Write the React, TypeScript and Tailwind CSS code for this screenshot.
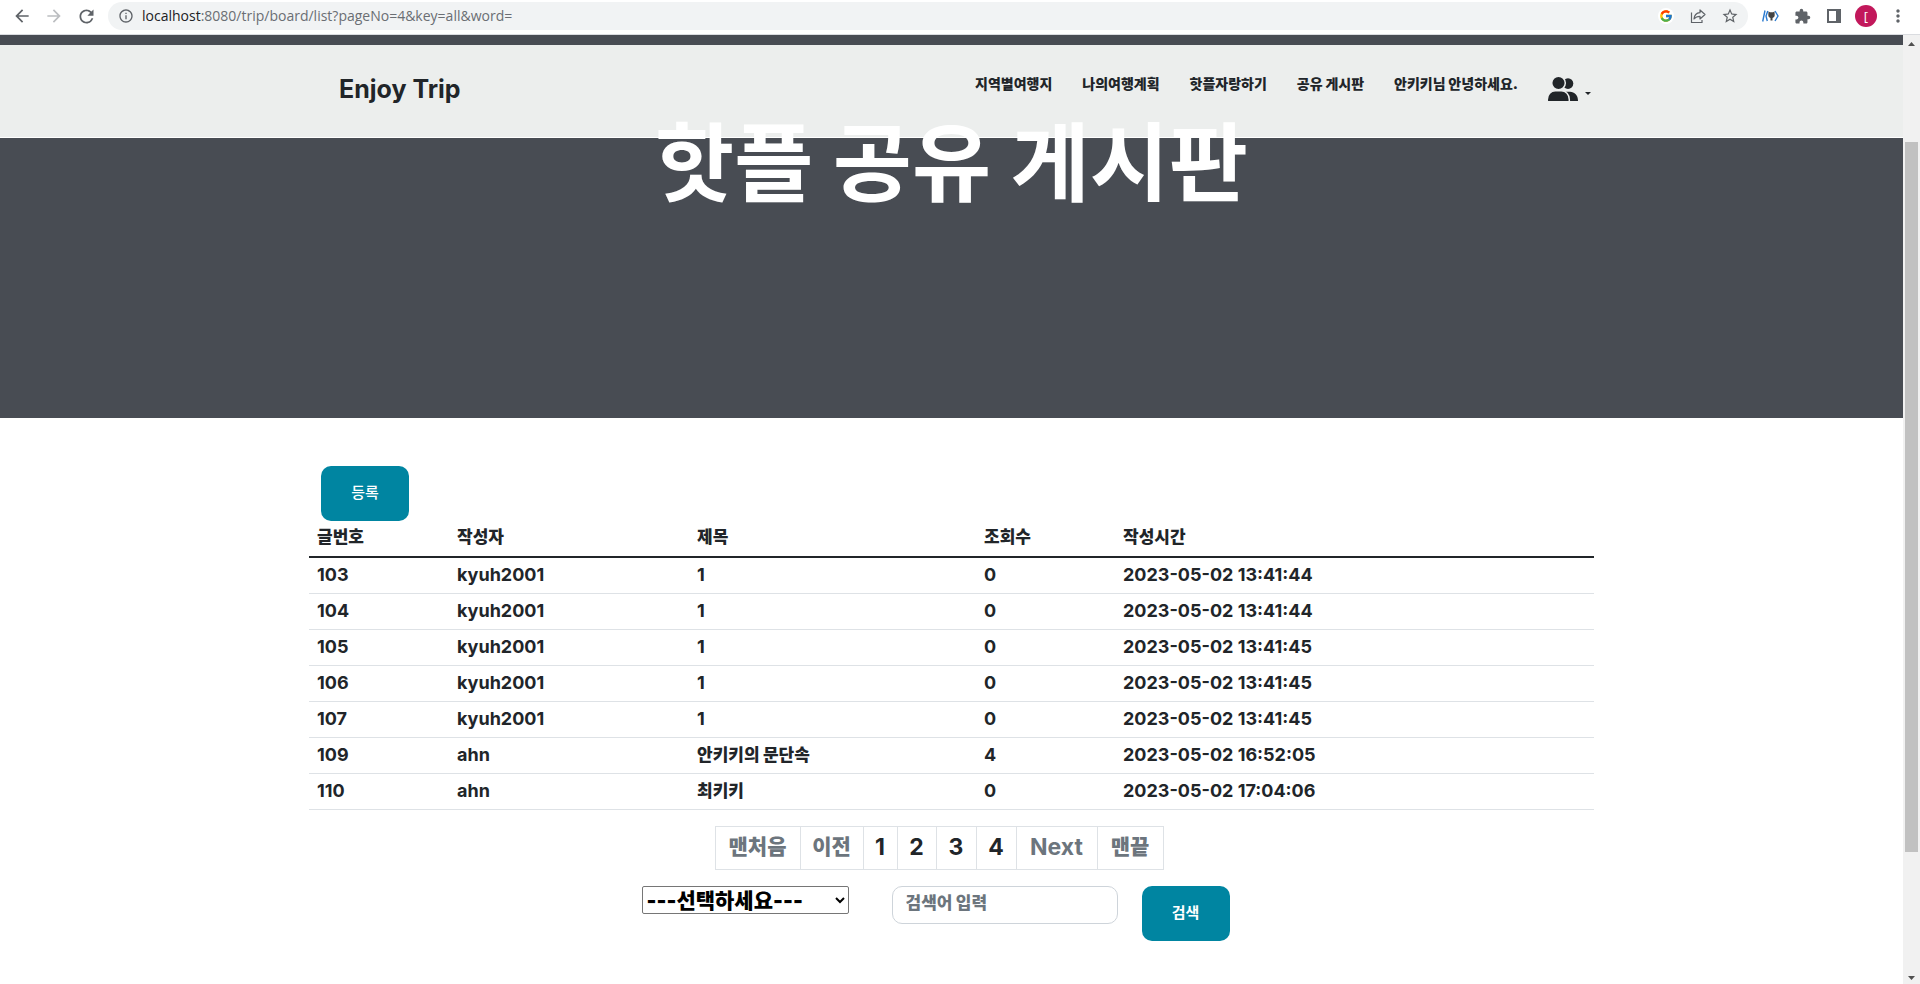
import { ReactNode } from "react";
import { FcGoogle } from "react-icons/fc";
import {
  MdArrowBack,
  MdArrowForward,
  MdExtension,
  MdInfoOutline,
  MdMoreVert,
  MdRefresh,
  MdStarBorder,
} from "react-icons/md";

const menu = ["지역별여행지", "나의여행계획", "핫플자랑하기", "공유 게시판", "안키키님 안녕하세요."];

const posts = [
  { no: 103, writer: "kyuh2001", title: "1", hits: 0, time: "2023-05-02 13:41:44" },
  { no: 104, writer: "kyuh2001", title: "1", hits: 0, time: "2023-05-02 13:41:44" },
  { no: 105, writer: "kyuh2001", title: "1", hits: 0, time: "2023-05-02 13:41:45" },
  { no: 106, writer: "kyuh2001", title: "1", hits: 0, time: "2023-05-02 13:41:45" },
  { no: 107, writer: "kyuh2001", title: "1", hits: 0, time: "2023-05-02 13:41:45" },
  { no: 109, writer: "ahn", title: "안키키의 문단속", hits: 4, time: "2023-05-02 16:52:05" },
  { no: 110, writer: "ahn", title: "최키키", hits: 0, time: "2023-05-02 17:04:06" },
];

const pages = [
  { label: "맨처음", style: "w-[86px] text-[21px] font-black text-[#6c757d]" },
  { label: "이전", style: "w-16 text-[21px] font-black text-[#6c757d]" },
  { label: "1", style: "w-[35px] text-[23px] font-bold text-[#212529]" },
  { label: "2", style: "w-10 text-[23px] font-bold text-[#212529]" },
  { label: "3", style: "w-[41px] text-[23px] font-bold text-[#212529]" },
  { label: "4", style: "w-[41px] text-[23px] font-bold text-[#212529]" },
  { label: "Next", style: "w-[82px] text-[23px] font-bold text-[#6c757d]" },
  { label: "맨끝", style: "w-[67px] text-[21px] font-black text-[#6c757d]" },
];

function IconButton({ label, children }: { label: string; children: ReactNode }) {
  return (
    <button type="button" aria-label={label} className="flex size-8 items-center justify-center">
      {children}
    </button>
  );
}

function BrowserBar() {
  return (
    <div className="flex h-[35px] items-center border-b border-[#dadce0] bg-white px-[6px] pb-[2px] text-[#5f6368]">
      <IconButton label="뒤로">
        <MdArrowBack size={20} />
      </IconButton>
      <span className="text-[#bcbec1]">
        <IconButton label="앞으로">
          <MdArrowForward size={20} />
        </IconButton>
      </span>
      <IconButton label="새로고침">
        <MdRefresh size={21} />
      </IconButton>
      <div className="ml-[6px] flex h-7 flex-1 items-center rounded-full bg-[#f1f3f4] pl-[10px] pr-[2px]">
        <MdInfoOutline size={16} />
        <p className="ml-[8px] flex-1 font-['Open_Sans',sans-serif] text-[14px] leading-5 text-[#6a6e73]">
          <span className="text-[#202124]">localhost</span>:8080/trip/board/list?pageNo=4&amp;key=all&amp;word=
        </p>
        <IconButton label="Google">
          <span className="flex size-4 items-center justify-center rounded-full bg-white">
            <FcGoogle size={14} />
          </span>
        </IconButton>
        <IconButton label="공유">
          <svg width="16" height="16" viewBox="0 0 16 16" fill="none" stroke="currentColor" strokeWidth="1.2">
            <path d="M1.5 4.500v10h10.500V12" />
            <path d="M10 2v2.700C6.500 5 4.300 7.200 4 11c1.500-2 3.300-2.700 6-2.700V11l5-4.500z" strokeLinejoin="round" />
          </svg>
        </IconButton>
        <IconButton label="북마크">
          <MdStarBorder size={18} />
        </IconButton>
      </div>
      <div className="ml-[6px] flex items-center">
        <IconButton label="GitHub 확장">
          <svg width="17" height="12" viewBox="0 0 17 12" fill="none">
            <path stroke="#2a7ad0" strokeWidth="1.400" d="M3 .5.700 11.500M5.800 1 4 6l1.300 5M13 1l3 5-3 5" />
            <path
              fill="#444"
              d="M6.500 1.500 8 2.300h3l1.500-.8.2 3.500c0 1.800-1 2.700-2.200 2.900V10.500h-2V7.900C7.200 7.700 6.300 6.800 6.300 5z"
            />
          </svg>
        </IconButton>
        <IconButton label="확장 프로그램">
          <MdExtension size={17} />
        </IconButton>
        <IconButton label="측면 패널">
          <svg width="14" height="14" viewBox="0 0 14 14">
            <path fill="currentColor" fillRule="evenodd" d="M0 0h14v14H0zM2 2v10h7V2z" />
          </svg>
        </IconButton>
        <IconButton label="프로필">
          <span className="flex size-[22px] items-center justify-center rounded-full bg-[#c2185b] font-['Open_Sans',sans-serif] text-[13px] leading-none text-white">
            [
          </span>
        </IconButton>
        <IconButton label="메뉴">
          <MdMoreVert size={20} />
        </IconButton>
      </div>
    </div>
  );
}

function Header() {
  return (
    <header className="h-[93px] border-b border-white bg-[#eceeed]">
      <div className="mx-auto flex max-w-[1285px] justify-between pl-[30px] pr-[3px] text-[#212529]">
        <a href="#home" className="mt-[30px] text-[25px] leading-7 font-bold">
          Enjoy Trip
        </a>
        <nav className="mt-7 flex gap-[30px] text-[14px] leading-[22px] font-black">
          {menu.map((item) => (
            <a key={item} href="#menu">
              {item}
            </a>
          ))}
          <button type="button" aria-label="회원 메뉴" className="flex h-8 items-center gap-[7px]">
            <svg width="30" height="24" viewBox="0 0 30 24">
              <g fill="currentColor">
                <circle cx="20" cy="6.600" r="5.300" />
                <path d="M14 24v-6c0-2 2-3.200 4.500-3.200h3.500c4.500 0 8 3.500 8 9.200z" />
              </g>
              <g fill="currentColor" stroke="#eceeed" strokeWidth="1.500">
                <ellipse cx="10.500" cy="6" rx="6.800" ry="6.700" />
                <path d="M-.7 25v-2.500c0-5 3.500-8.700 8-8.700h6c4.500 0 8 3.700 8 8.700V25z" />
              </g>
            </svg>
            <svg width="6" height="3" viewBox="0 0 6 3" className="mt-2">
              <path fill="currentColor" d="M0 0h6L3 3z" />
            </svg>
          </button>
        </nav>
      </div>
    </header>
  );
}

function Scrollbar() {
  return (
    <div aria-hidden="true" className="flex w-[17px] flex-col items-center bg-[#f1f1f1] text-[#505050]">
      <svg width="17" height="17" viewBox="0 0 17 17">
        <path fill="currentColor" d="M5 11h7L8.500 7z" />
      </svg>
      <div className="flex-[90]" />
      <div className="w-[13px] flex-[710] bg-[#c1c1c1]" />
      <div className="flex-[115]" />
      <svg width="17" height="17" viewBox="0 0 17 17">
        <path fill="currentColor" d="M5 9h7l-3.500 4z" />
      </svg>
    </div>
  );
}

function Board() {
  return (
    <main className="mx-auto max-w-[1285px] pt-12 text-[#212529]">
      <button
        type="button"
        className="ml-3 block h-[55px] w-[88px] rounded-[10px] bg-[#0085a1] text-[15px] font-medium text-white"
      >
        등록
      </button>
      <table className="w-full table-fixed border-collapse text-left">
        <thead>
          <tr className="h-9 border-b-2 border-[#212529] text-[17px] leading-5">
            <th className="w-[140px] px-2 pb-1 font-black">글번호</th>
            <th className="w-[240px] px-2 pb-1 font-black">작성자</th>
            <th className="w-[287px] px-2 pb-1 font-black">제목</th>
            <th className="w-[139px] px-2 pb-1 font-black">조회수</th>
            <th className="px-2 pb-1 font-black">작성시간</th>
          </tr>
        </thead>
        <tbody>
          {posts.map((post) => (
            <tr key={post.no} className="h-9 border-b border-[#dee2e6] text-[18px] leading-6 font-bold">
              <td className="px-2">{post.no}</td>
              <td className="px-2">{post.writer}</td>
              <td className="px-2">
                {post.title === "1" ? post.title : <span className="text-[17px] font-black">{post.title}</span>}
              </td>
              <td className="px-2">{post.hits}</td>
              <td className="px-2">{post.time}</td>
            </tr>
          ))}
        </tbody>
      </table>
      <nav aria-label="페이지" className="mt-4 mr-6 flex justify-center">
        {pages.map((page) => (
          <a
            key={page.label}
            href="#page"
            className={`-ml-px flex h-11 justify-center border border-[#dee2e6] pt-[5px] leading-[30px] ${page.style}`}
          >
            {page.label}
          </a>
        ))}
      </nav>
      <form className="mt-4 mr-8 flex items-start justify-center">
        <select
          aria-label="검색 조건"
          className="h-7 w-[207px] rounded-[2px] border border-[#767676] bg-white text-[21px] leading-6 font-black text-black"
        >
          <option>---선택하세요---</option>
        </select>
        <input
          type="text"
          aria-label="검색어"
          placeholder="검색어 입력"
          className="ml-[43px] h-[38px] w-[226px] rounded-[10px] border border-[#ced4da] px-[13px] pb-1 text-[17px] font-black placeholder:text-[#6c757d]"
        />
        <button
          type="button"
          className="ml-6 h-[55px] w-[88px] rounded-[10px] bg-[#0085a1] text-[15px] font-bold text-white"
        >
          검색
        </button>
      </form>
    </main>
  );
}

export default function App() {
  return (
    <div className="flex min-h-screen flex-col bg-white font-['Inter','Noto_Sans_CJK_KR',sans-serif]">
      <BrowserBar />
      <div className="flex flex-1">
        <div className="min-w-0 flex-1">
          <section className="bg-[#484c53] pt-[10px] pb-[210px]">
            <Header />
            <h1 className="-mt-[30px] text-center font-['Noto_Sans_CJK_KR',sans-serif] text-[86px] leading-[100px] font-bold text-white">
              핫플 공유 게시판
            </h1>
          </section>
          <Board />
        </div>
        <Scrollbar />
      </div>
    </div>
  );
}
